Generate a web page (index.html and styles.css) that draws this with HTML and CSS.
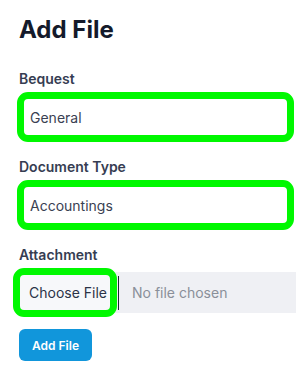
FILE: index.html
```html
<!DOCTYPE html>
<html lang="en">

<head>
    <meta charset="UTF-8">
    <meta name="viewport" content="width=device-width, initial-scale=1.0">
    <title>Add File</title>
    <link rel="stylesheet" href="styles.css">
</head>

<body>

    <div class="page">
        <h1 class="title">Add File</h1>

        <form class="file-form">
            <div class="field">
                <label for="bequestInput">Bequest</label>
                <input type="text" id="bequestInput" class="text-input" value="General">
            </div>

            <div class="field">
                <label for="typeInput">Document Type</label>
                <input type="text" id="typeInput" class="text-input" value="Accountings">
            </div>

            <div class="field">
                <label>Attachment</label>
                <div class="file-input">
                    <span class="file-btn">Choose File</span>
                    <span class="file-divider"></span>
                    <span class="file-name">No file chosen</span>
                </div>
            </div>

            <button type="button" class="submit-btn">Add File</button>
        </form>
    </div>

</body>

</html>
```

FILE: styles.css
```css
body {
    margin: 0;
    padding: 0;
    background: #fff;
    font-family: 'Inter', 'Liberation Sans', sans-serif;
    color: #1f2937;
    overflow: hidden;
}

.page {
    padding: 15px 0 0 19px;
}

.title {
    margin: 0;
    font-size: 24px;
    line-height: 29px;
    font-weight: 700;
    color: #141a2b;
}

.file-form {
    display: flex;
    flex-direction: column;
    margin-top: 26px;
}

.field {
    display: flex;
    flex-direction: column;
    margin-bottom: 23px;
}

.field label {
    font-size: 14px;
    line-height: 17px;
    font-weight: 600;
    color: #363d52;
    margin-bottom: 12px;
}

.text-input {
    box-sizing: border-box;
    width: 263px;
    height: 36px;
    margin-left: 5px;
    padding: 0 6px;
    border: none;
    border-radius: 4px;
    background: #fff;
    font: inherit;
    font-size: 14px;
    color: #3a4152;
    outline: 7px solid #00f800;
}

/* file picker row */
.file-input {
    display: flex;
    align-items: center;
    height: 41px;
    margin-top: -3px;
    background: #eff0f4;
}

.file-btn {
    box-sizing: border-box;
    display: flex;
    align-items: center;
    height: 35px;
    width: 90px;
    margin-left: 1px;
    padding-left: 9px;
    border-radius: 4px;
    background: #f7f8fa;
    font-size: 14px;
    color: #2b3347;
    outline: 7px solid #00f800;
    white-space: nowrap;
}

.file-divider {
    width: 1px;
    height: 34px;
    margin-left: 8px;
    background: #1d2333;
}

.file-name {
    margin-left: 13px;
    font-size: 14px;
    color: #8a8f99;
}

.submit-btn {
    align-self: flex-start;
    height: 32px;
    width: 73px;
    margin-top: -7px;
    border: none;
    border-radius: 6px;
    background: #1196db;
    color: #fff;
    font: inherit;
    font-size: 12px;
    font-weight: 600;
    cursor: pointer;
}
```
